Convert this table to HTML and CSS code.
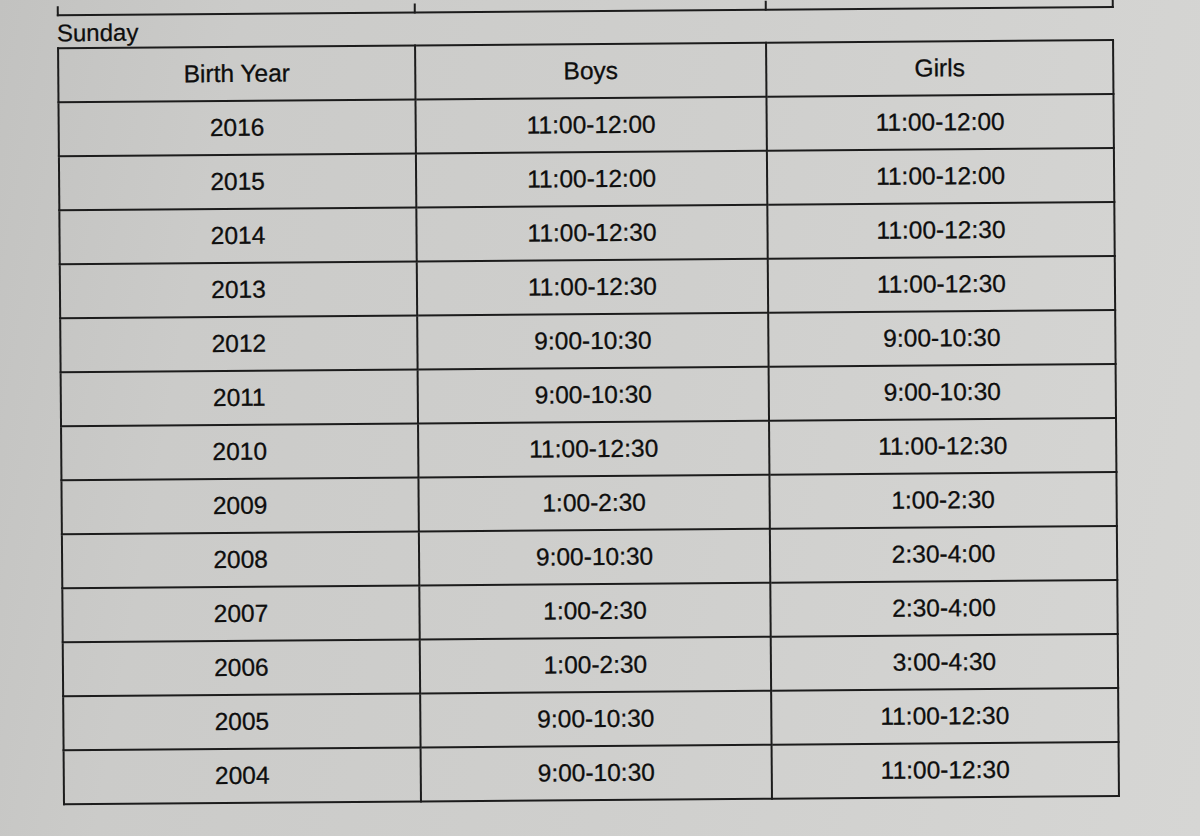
FILE: index.html
```html
<!DOCTYPE html>
<html>
<head>
<meta charset="utf-8">
<link rel="stylesheet" href="styles.css">
</head>
<body>
<div class="page">
  <table class="prev">
    <tr><td class="c1"></td><td class="c2"></td><td class="c3"></td></tr>
  </table>
  <div class="day">Sunday</div>
  <table class="sched">
    <thead>
      <tr><th class="c1">Birth Year</th><th class="c2">Boys</th><th class="c3">Girls</th></tr>
    </thead>
    <tbody>
      <tr><td>2016</td><td>11:00-12:00</td><td>11:00-12:00</td></tr>
      <tr><td>2015</td><td>11:00-12:00</td><td>11:00-12:00</td></tr>
      <tr><td>2014</td><td>11:00-12:30</td><td>11:00-12:30</td></tr>
      <tr><td>2013</td><td>11:00-12:30</td><td>11:00-12:30</td></tr>
      <tr><td>2012</td><td>9:00-10:30</td><td>9:00-10:30</td></tr>
      <tr><td>2011</td><td>9:00-10:30</td><td>9:00-10:30</td></tr>
      <tr><td>2010</td><td>11:00-12:30</td><td>11:00-12:30</td></tr>
      <tr><td>2009</td><td>1:00-2:30</td><td>1:00-2:30</td></tr>
      <tr><td>2008</td><td>9:00-10:30</td><td>2:30-4:00</td></tr>
      <tr><td>2007</td><td>1:00-2:30</td><td>2:30-4:00</td></tr>
      <tr><td>2006</td><td>1:00-2:30</td><td>3:00-4:30</td></tr>
      <tr><td>2005</td><td>9:00-10:30</td><td>11:00-12:30</td></tr>
      <tr><td>2004</td><td>9:00-10:30</td><td>11:00-12:30</td></tr>
    </tbody>
  </table>
</div>
</body>
</html>
```

FILE: styles.css
```css
html, body {
  margin: 0;
  padding: 0;
}
body {
  width: 1200px;
  height: 836px;
  overflow: hidden;
  background: linear-gradient(100deg, #c2c2c0 0%, #cbcbc9 18%, #cfcfcd 55%, #d6d6d4 100%);
  font-family: "Liberation Sans", Arial, sans-serif;
  color: #0e0e0e;
}
.page {
  padding-left: 60px;
  padding-top: 2px;
  height: 836px;
  box-sizing: border-box;
  transform: rotate(-0.45deg);
  transform-origin: 600px 420px;
}
table {
  border-collapse: collapse;
  table-layout: fixed;
  width: 1049px;
}
.c1 { width: 355px; }
.c2 { width: 349px; }
.c3 { width: 345px; }
.prev td {
  height: 8px;
  padding: 0;
  border-left: 2px solid #1c1c1c;
  border-right: 2px solid #1c1c1c;
  border-bottom: 2px solid #1c1c1c;
}
.day {
  font-size: 24px;
  line-height: 27px;
  height: 28px;
  padding-top: 3px;
  -webkit-text-stroke: 0.25px #0e0e0e;
}
.sched th,
.sched td {
  border: 2px solid #1c1c1c;
  height: 52px;
  padding: 0;
  text-align: center;
  vertical-align: middle;
  font-size: 24.5px;
  font-weight: normal;
  -webkit-text-stroke: 0.3px #0e0e0e;
}
```
